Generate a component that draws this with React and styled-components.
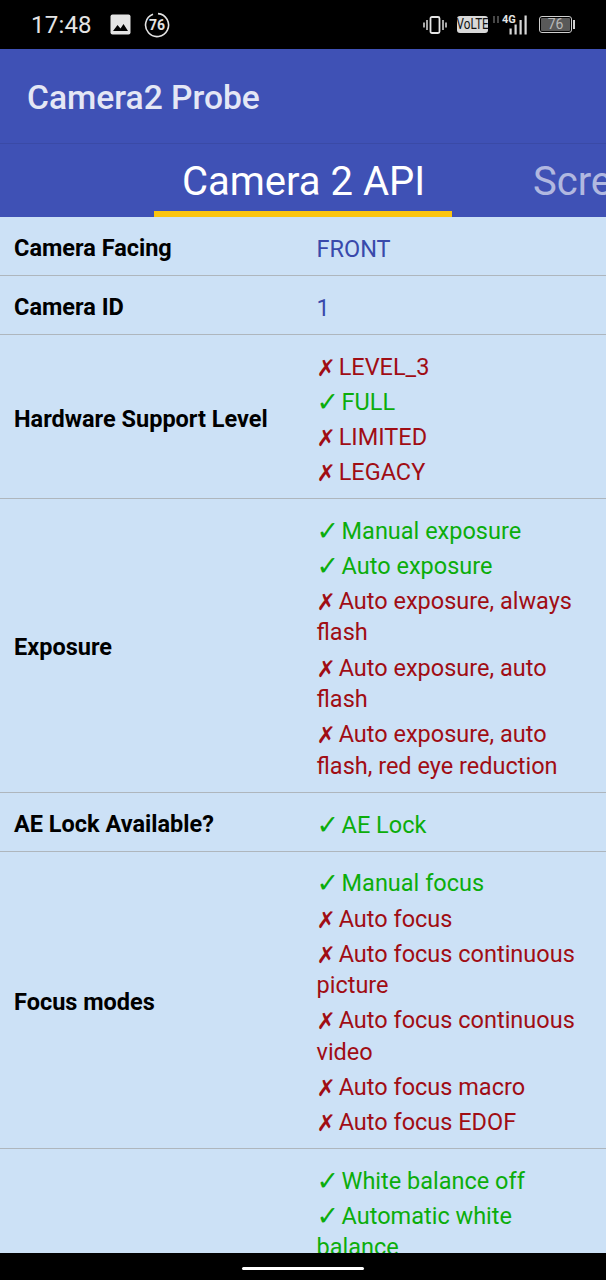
import styled, { createGlobalStyle } from 'styled-components'

const GlobalStyle = createGlobalStyle`
  html, body {
    margin: 0;
    padding: 0;
    background: #000;
  }
  * {
    box-sizing: border-box;
  }
`

const Screen = styled.div`
  display: flex;
  flex-direction: column;
  width: 606px;
  height: 1280px;
  overflow: hidden;
  font-family: Roboto, 'DejaVu Sans', sans-serif;
`

const StatusBar = styled.div`
  display: flex;
  flex: none;
  align-items: center;
  justify-content: space-between;
  height: 49px;
  padding: 0 31px 0 31px;
  background: #000;
  color: #e4e4e4;
`

const StatusGroup = styled.div`
  display: flex;
  align-items: center;
`

const Clock = styled.span`
  margin-right: 18px;
  font-size: 24px;
  letter-spacing: 0.2px;
`

const TimerWrap = styled.span`
  display: flex;
  margin-left: 13px;
`

const VolteBadge = styled.span`
  display: block;
  width: 31px;
  height: 17px;
  margin: 0 3px 0 10px;
  border-radius: 3px;
  background: #d8d8d8;
  color: #111;
  font-size: 15px;
  line-height: 17px;
  text-align: center;
  overflow: hidden;
`

const VolteText = styled.span`
  display: inline-block;
  margin-left: -10px;
  margin-right: -10px;
  transform: scaleX(0.78);
  white-space: nowrap;
`

const Battery = styled.div`
  display: flex;
  align-items: center;
  gap: 1px;
  margin-left: 12px;
`

const BatteryBody = styled.div`
  width: 33px;
  height: 17px;
  border: 1.5px solid #cfcfcf;
  border-radius: 3px;
  padding: 1px;
`

const BatteryFill = styled.div`
  height: 100%;
  border-radius: 1px;
  background: #595959;
  color: #b8b8b8;
  font-size: 14px;
  line-height: 12px;
  text-align: center;
`

const BatteryNub = styled.div`
  width: 2px;
  height: 9px;
  background: #cfcfcf;
`

const AppBar = styled.header`
  display: flex;
  flex: none;
  align-items: center;
  height: 95px;
  padding: 2px 27px 0 27px;
  background: #3f51b5;
  border-bottom: 1px solid #3a4aa6;
  color: #e4e7f5;
  font-size: 33.6px;
  font-weight: 500;
`

const TabBar = styled.nav`
  display: flex;
  flex: none;
  height: 73px;
  padding-left: 154px;
  overflow: hidden;
  background: #3f51b5;
`

const Tab = styled.div`
  flex: none;
  width: ${({ $active }) => ($active ? '298px' : 'auto')};
  margin-left: ${({ $active }) => ($active ? '0' : '53px')};
  padding: 12px 28px 0;
  border-bottom: 6px solid ${({ $active }) => ($active ? '#fbc50f' : 'transparent')};
  color: ${({ $active }) => ($active ? '#fff' : 'rgba(255, 255, 255, 0.6)')};
  font-size: 40px;
  line-height: 52px;
  text-align: center;
  white-space: nowrap;
`

const Content = styled.main`
  flex: 1;
  min-height: 0;
  overflow: hidden;
  background: #cce1f6;
`

const Row = styled.section`
  display: grid;
  grid-template-columns: 302.5px 1fr;
  align-items: center;
  padding: 15px 16px 11px 14px;
  border-bottom: 1.5px solid #aeb6bd;
`

const Label = styled.div`
  color: #000;
  font-size: 23.5px;
  font-weight: 700;
  line-height: 32px;
`

const Values = styled.div`
  display: flex;
  flex-direction: column;
  gap: 3.7px;
  padding-top: 1.5px;
  margin-bottom: -1.5px;
`

const Value = styled.div`
  color: ${({ $tone }) => ({ plain: '#3949ab', yes: '#0bad0b', no: '#a00d14' })[$tone]};
  font-size: 23.5px;
  line-height: 31.5px;
`

const Mark = styled.span`
  margin-right: ${({ $tone }) => ($tone === 'yes' ? '-3.4px' : '-3px')};
  font-family: 'DejaVu Sans', sans-serif;
  font-size: ${({ $tone }) => ($tone === 'yes' ? '27px' : '23px')};
  font-weight: 700;
  line-height: 1px;
  vertical-align: -1px;
`

const NavBar = styled.div`
  display: flex;
  flex: none;
  justify-content: center;
  height: 27px;
  padding-top: 14px;
  background: #000;
`

const HomePill = styled.div`
  width: 122px;
  height: 3px;
  border-radius: 2px;
  background: #fff;
`

const rows = [
  { label: 'Camera Facing', items: [['plain', 'FRONT']] },
  { label: 'Camera ID', items: [['plain', '1']] },
  {
    label: 'Hardware Support Level',
    items: [['no', 'LEVEL_3'], ['yes', 'FULL'], ['no', 'LIMITED'], ['no', 'LEGACY']],
  },
  {
    label: 'Exposure',
    items: [
      ['yes', 'Manual exposure'],
      ['yes', 'Auto exposure'],
      ['no', 'Auto exposure, always flash'],
      ['no', 'Auto exposure, auto flash'],
      ['no', 'Auto exposure, auto flash, red eye reduction'],
    ],
  },
  { label: 'AE Lock Available?', items: [['yes', 'AE Lock']] },
  {
    label: 'Focus modes',
    items: [
      ['yes', 'Manual focus'],
      ['no', 'Auto focus'],
      ['no', 'Auto focus continuous picture'],
      ['no', 'Auto focus continuous video'],
      ['no', 'Auto focus macro'],
      ['no', 'Auto focus EDOF'],
    ],
  },
  {
    label: 'White balance',
    items: [
      ['yes', 'White balance off'],
      ['yes', 'Automatic white balance'],
      ['yes', 'Incandescent'],
      ['yes', 'Fluorescent'],
      ['yes', 'Daylight'],
      ['yes', 'Cloudy'],
    ],
  },
]

function ImageIcon() {
  return (
    <svg width="21" height="21" viewBox="0 0 21 21">
      <rect x="0.5" y="0.5" width="20" height="20" rx="2" fill="#e4e4e4" />
      <path d="M3 17l4.5-6 3 3.5 3-4.5 4.5 7z" fill="#000" />
    </svg>
  )
}

function TimerBadge() {
  return (
    <svg width="26" height="26" viewBox="0 0 26 26">
      <path d="M14 1.6a11.5 11.5 0 1 1-5 .7" fill="none" stroke="#e4e4e4" strokeWidth="1.6" />
      <text x="13" y="18" textAnchor="middle" fontSize="14" fontWeight="700" fill="#e4e4e4">
        76
      </text>
    </svg>
  )
}

function VibrateIcon() {
  return (
    <svg width="24" height="18" viewBox="0 0 24 18">
      <rect x="7.5" y="1" width="9" height="16" rx="1.5" fill="none" stroke="#e4e4e4" strokeWidth="1.8" />
      <path d="M4 4v10M1 6.5v5M20 4v10M23 6.5v5" stroke="#b8b8b8" strokeWidth="1.8" />
    </svg>
  )
}

function SignalIcon() {
  return (
    <svg width="36" height="21" viewBox="0 0 36 21">
      <path d="M3 2v7M7 2v7" stroke="#777" strokeWidth="1.2" />
      <text x="11" y="9" fontSize="11" fontWeight="700" fill="#e4e4e4">
        4G
      </text>
      <path d="M19.6 20.5v-6M24.6 20.5v-10M29.6 20.5V6M34.6 20.5V1.5" stroke="#d8d8d8" strokeWidth="2.2" />
    </svg>
  )
}

function ValueLine({ tone, text }) {
  return (
    <Value $tone={tone}>
      {tone !== 'plain' && <Mark $tone={tone}>{tone === 'yes' ? '✓' : '✗'}</Mark>} {text}
    </Value>
  )
}

function App() {
  return (
    <Screen>
      <GlobalStyle />
      <StatusBar>
        <StatusGroup>
          <Clock>17:48</Clock>
          <ImageIcon />
          <TimerWrap>
            <TimerBadge />
          </TimerWrap>
        </StatusGroup>
        <StatusGroup>
          <VibrateIcon />
          <VolteBadge>
            <VolteText>VoLTE</VolteText>
          </VolteBadge>
          <SignalIcon />
          <Battery>
            <BatteryBody>
              <BatteryFill>76</BatteryFill>
            </BatteryBody>
            <BatteryNub />
          </Battery>
        </StatusGroup>
      </StatusBar>
      <AppBar>Camera2 Probe</AppBar>
      <TabBar>
        <Tab $active>Camera 2 API</Tab>
        <Tab>Screen Info</Tab>
      </TabBar>
      <Content>
        {rows.map((row) => (
          <Row key={row.label}>
            <Label>{row.label}</Label>
            <Values>
              {row.items.map(([tone, text]) => (
                <ValueLine key={text} tone={tone} text={text} />
              ))}
            </Values>
          </Row>
        ))}
      </Content>
      <NavBar>
        <HomePill />
      </NavBar>
    </Screen>
  )
}

export default App
